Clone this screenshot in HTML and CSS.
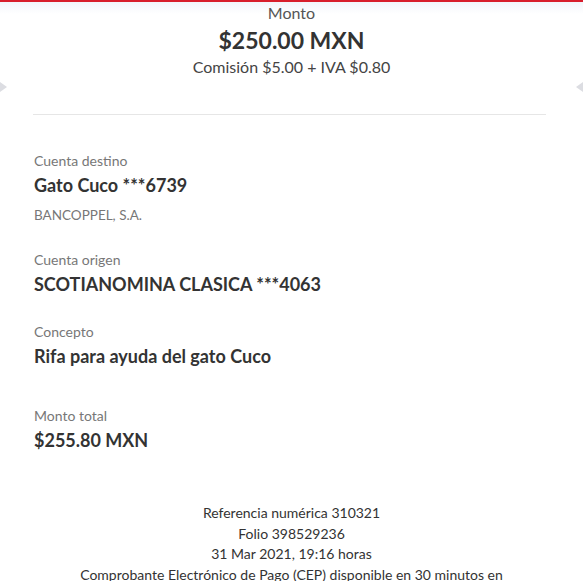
FILE: index.html
```html
<!DOCTYPE html>
<html lang="es">
<head>
  <meta charset="UTF-8">
  <meta name="viewport" content="width=device-width, initial-scale=1.0">
  <title>Comprobante</title>
  <link rel="stylesheet" href="styles.css">
</head>
<body>
  <div class="ticket">
    <span class="notch notch-left"></span>
    <span class="notch notch-right"></span>

    <div class="summary">
      <div class="summary-label">Monto</div>
      <div class="summary-amount">$250.00 MXN</div>
      <div class="summary-fee">Comisión $5.00 + IVA $0.80</div>
    </div>

    <hr class="divider">

    <div class="details">
      <div class="field">
        <div class="field-label">Cuenta destino</div>
        <div class="field-value">Gato Cuco ***6739</div>
        <div class="field-sub">BANCOPPEL, S.A.</div>
      </div>
      <div class="field">
        <div class="field-label">Cuenta origen</div>
        <div class="field-value">SCOTIANOMINA CLASICA ***4063</div>
      </div>
      <div class="field">
        <div class="field-label">Concepto</div>
        <div class="field-value">Rifa para ayuda del gato Cuco</div>
      </div>
      <div class="field field-total">
        <div class="field-label">Monto total</div>
        <div class="field-value">$255.80 MXN</div>
      </div>
    </div>

    <div class="footer">
      <div>Referencia numérica 310321</div>
      <div>Folio 398529236</div>
      <div>31 Mar 2021, 19:16 horas</div>
      <div>Comprobante Electrónico de Pago (CEP) disponible en 30 minutos en</div>
    </div>
  </div>
</body>
</html>
```

FILE: styles.css
```css
html, body {
  margin: 0;
  padding: 0;
  height: 100%;
  overflow: hidden;
}
body {
  font-family: Lato, "Open Sans", sans-serif;
  color: #333;
  background: #fff;
  border-top: 2px solid #d81e2c;
}
.ticket {
  position: relative;
  background: linear-gradient(#f2f5fb, #fff 12px);
}
.notch {
  position: absolute;
  top: 80px;
  width: 0;
  height: 0;
  border-top: 5px solid transparent;
  border-bottom: 5px solid transparent;
}
.notch-left {
  left: 0;
  border-left: 7px solid #dcdde2;
}
.notch-right {
  right: 0;
  border-right: 7px solid #dcdde2;
}
.summary {
  text-align: center;
  padding-top: 1px;
}
.summary-label {
  font-size: 16px;
  color: #555;
  line-height: 20px;
}
.summary-amount {
  font-size: 23px;
  font-weight: bold;
  color: #333;
  line-height: 32px;
  margin-top: 1px;
}
.summary-fee {
  font-size: 16px;
  color: #444;
  line-height: 20px;
  margin-top: 1px;
}
.divider {
  border: none;
  border-top: 1px solid #e6e6e6;
  margin: 37px 37px 0 33px;
}
.details {
  padding: 36px 34px 0 34px;
}
.field {
  margin-bottom: 25px;
}
.field:last-child {
  margin-bottom: 0;
}
.field-label {
  font-size: 14px;
  color: #777;
  line-height: 20px;
}
.field-value {
  font-size: 18px;
  font-weight: bold;
  color: #333;
  line-height: 26px;
  margin-top: 1px;
}
.field-sub {
  font-size: 13.5px;
  color: #777;
  line-height: 20px;
  margin-top: 7px;
}
.field-total {
  margin-top: 37px;
}
.footer {
  text-align: center;
  font-size: 14px;
  color: #333;
  line-height: 20.7px;
  padding-top: 50px;
}
```
